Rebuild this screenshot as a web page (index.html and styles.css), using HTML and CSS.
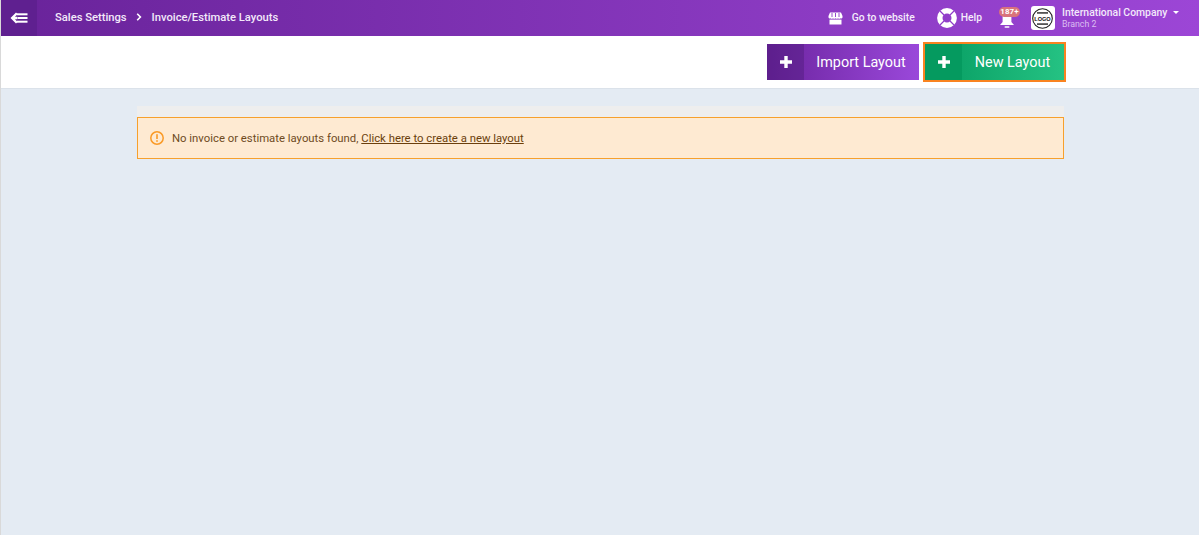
FILE: index.html
```html
<!DOCTYPE html>
<html lang="en">
<head>
<meta charset="utf-8">
<title>Invoice/Estimate Layouts</title>
<link rel="stylesheet" href="styles.css">
</head>
<body>
<div class="page">
  <header class="topbar">
    <div class="topbar-left">
      <a class="back" aria-label="Back">
        <svg width="18" height="12" viewBox="0 0 18 12"><path d="M6 0.5 L0.5 6 L6 11.5 L7.6 10 L5 7.3 H7.4 V4.7 H5 L7.6 2 Z" fill="#fff"/><rect x="6.6" y="1.3" width="10.9" height="2" fill="#fff"/><rect x="7.6" y="5" width="9.9" height="2" fill="#fff"/><rect x="6.6" y="8.7" width="10.9" height="2" fill="#fff"/></svg>
      </a>
      <nav class="crumbs">
        <span>Sales Settings</span>
        <svg class="chev" width="6" height="8" viewBox="0 0 6 8"><path d="M1.2 0.8 L4.4 4 L1.2 7.2" fill="none" stroke="#fff" stroke-width="1.6"/></svg>
        <span>Invoice/Estimate Layouts</span>
      </nav>
    </div>
    <div class="topbar-right">
      <a class="top-link site">
        <svg width="15" height="13" viewBox="0 0 15 13"><path d="M2 0.5 H13 L14.5 4 V5.5 A1.5 1.5 0 0 1 12.5 6.3 A2 2 0 0 1 10 6.3 A2 2 0 0 1 7.5 6.3 A2 2 0 0 1 5 6.3 A2 2 0 0 1 2.5 6.3 A1.5 1.5 0 0 1 0.5 5.5 V4 Z" fill="#fff"/><path d="M4 1 V5 M7.5 1 V5 M11 1 V5" stroke="#8a38c6" stroke-width=".9"/><path d="M1.5 7.6 H13.5 V12.5 H1.5 Z" fill="#fff"/></svg>
        <span>Go to website</span>
      </a>
      <a class="top-link help">
        <svg width="20" height="20" viewBox="0 0 20 20"><circle cx="10" cy="10" r="7.2" fill="none" stroke="#fff" stroke-width="5.4"/><path d="M3 3 L7 7 M17 3 L13 7 M3 17 L7 13 M17 17 L13 13" stroke="#8f3cc9" stroke-width="1.2"/></svg>
        <span>Help</span>
      </a>
      <a class="bell" aria-label="Notifications">
        <svg width="16" height="20" viewBox="0 0 16 20"><path d="M8 4 C11.5 4 12.4 6 12.4 8.5 V13 L15 16 H1 L3.6 13 V8.5 C3.6 6 4.5 4 8 4 Z" fill="#fff"/><rect x="5.5" y="17.2" width="5" height="1.6" rx=".8" fill="#fff"/></svg>
        <span class="badge">187+</span>
      </a>
      <div class="account">
        <div class="logo">
          <svg width="21" height="21" viewBox="0 0 21 21"><circle cx="10.5" cy="10.5" r="9.8" fill="#fff" stroke="#222" stroke-width="1.1"/><rect x="5" y="4" width="11" height="1.8" fill="#555"/><rect x="5" y="15.2" width="11" height="1.8" fill="#555"/><text x="10.5" y="12.6" text-anchor="middle" class="logo-text">LOGO</text></svg>
        </div>
        <div class="account-text">
          <div class="company">International Company <i class="caret"></i></div>
          <div class="branch">Branch 2</div>
        </div>
      </div>
    </div>
  </header>

  <div class="toolbar">
    <a class="btn btn-purple">
      <span class="btn-icon"><svg width="12" height="12" viewBox="0 0 12 12"><path d="M4.3 0 H7.7 V4.3 H12 V7.7 H7.7 V12 H4.3 V7.7 H0 V4.3 H4.3 Z" fill="#fff"/></svg></span>
      <span class="btn-label">Import Layout</span>
    </a>
    <a class="btn btn-green">
      <span class="btn-icon"><svg width="12" height="12" viewBox="0 0 12 12"><path d="M4.3 0 H7.7 V4.3 H12 V7.7 H7.7 V12 H4.3 V7.7 H0 V4.3 H4.3 Z" fill="#fff"/></svg></span>
      <span class="btn-label">New Layout</span>
    </a>
  </div>

  <main class="content">
    <div class="strip"></div>
    <div class="alert">
      <svg width="14" height="14" viewBox="0 0 14 14"><circle cx="7" cy="7" r="6.2" fill="none" stroke="#fa9a26" stroke-width="1.5"/><rect x="6.2" y="3.2" width="1.6" height="4.8" fill="#fa9a26"/><rect x="6.2" y="9.2" width="1.6" height="1.6" fill="#fa9a26"/></svg>
      <p>No invoice or estimate layouts found, <a class="alert-link">Click here to create a new layout</a></p>
    </div>
  </main>
</div>
</body>
</html>
```
FILE: styles.css
```css
* { box-sizing: border-box; }
html, body { margin: 0; height: 100%; }
body {
  font-family: Roboto, "Liberation Sans", sans-serif;
  background: #e4ebf3;
  overflow: hidden;
}
.page {
  height: 535px;
  display: flex;
  flex-direction: column;
  border-left: 1px solid #d9d9d9;
}
.topbar {
  height: 36px;
  display: flex;
  justify-content: space-between;
  background: linear-gradient(90deg, #69239a 0%, #9c46d6 100%);
  color: #fff;
  flex: none;
}
.topbar-left, .topbar-right { display: flex; align-items: center; }
.back {
  width: 36px;
  height: 36px;
  display: flex;
  align-items: center;
  justify-content: center;
  background: #5f2090;
}
.crumbs {
  display: flex;
  align-items: center;
  margin-left: 18px;
  padding-bottom: 2px;
  font-size: 11.2px;
  font-weight: 500;
  color: #f3e9fa;
}
.chev { margin: 0 10px 0 9px; }
.top-link {
  display: flex;
  align-items: center;
  font-size: 10.3px;
  font-weight: 500;
  color: #f5ecfb;
}
.top-link span { padding-bottom: 2px; }
.site { gap: 9px; }
.help { gap: 4px; margin-left: 22px; }
.bell {
  position: relative;
  width: 16px;
  height: 20px;
  margin-left: 17px;
  margin-top: 2px;
}
.badge {
  position: absolute;
  left: 0;
  top: -2px;
  width: 21px;
  height: 10px;
  border-radius: 5px;
  background: #d9737b;
  color: #fff;
  font-size: 8px;
  font-weight: 700;
  line-height: 10px;
  text-align: center;
}
.account { display: flex; align-items: center; margin-left: 16px; margin-right: 20px; }
.logo {
  width: 24px;
  height: 24px;
  border-radius: 3px;
  background: #fff;
  display: flex;
  align-items: center;
  justify-content: center;
}
.logo-text { font: 700 5.6px "Liberation Sans", sans-serif; fill: #111; }
.account-text { margin-left: 7px; }
.company { font-size: 10.4px; font-weight: 500; line-height: 12px; color: #f3e9fa; white-space: nowrap; margin-top: 1px; }
.caret {
  display: inline-block;
  width: 0;
  height: 0;
  margin-left: 3px;
  vertical-align: 2px;
  border-left: 3px solid transparent;
  border-right: 3px solid transparent;
  border-top: 3px solid #fff;
}
.branch { font-size: 8.8px; line-height: 11px; color: #dcbdf2; }
.toolbar {
  height: 53px;
  flex: none;
  display: flex;
  align-items: center;
  justify-content: flex-end;
  gap: 4px;
  padding: 0 133px 1px 0;
  background: #fff;
  border-bottom: 1px solid #dbe2ea;
}
.btn {
  display: flex;
  height: 36px;
  color: #fff;
  font-size: 14.4px;
}
.btn-purple {
  width: 152px;
  background: linear-gradient(90deg, #6c249f 0%, #9a48da 100%);
}
.btn-green {
  width: 143px;
  height: 40px;
  border: 2px solid #f98320;
  background: linear-gradient(90deg, #059b60 0%, #25c283 100%);
}
.btn-icon {
  width: 37px;
  flex: none;
  display: flex;
  align-items: center;
  justify-content: center;
  background: rgba(60, 20, 100, 0.3);
}
.btn-green .btn-icon { background: #059a5f; }
.btn-label {
  flex: 1;
  display: flex;
  align-items: center;
  justify-content: center;
  padding: 1px 1px 0 0;
}
.content {
  width: 927px;
  margin: 17px 0 0 136px;
}
.strip { height: 11px; background: #eeeeee; }
.alert {
  height: 42px;
  display: flex;
  align-items: center;
  gap: 8px;
  padding: 0 0 0 12px;
  background: #feead2;
  border: 1px solid #f7a02c;
}
.alert p {
  margin: 0;
  font-size: 11.33px;
  color: #6e4a1e;
}
.alert-link { color: #6b3f0c; text-decoration: underline; }
```
